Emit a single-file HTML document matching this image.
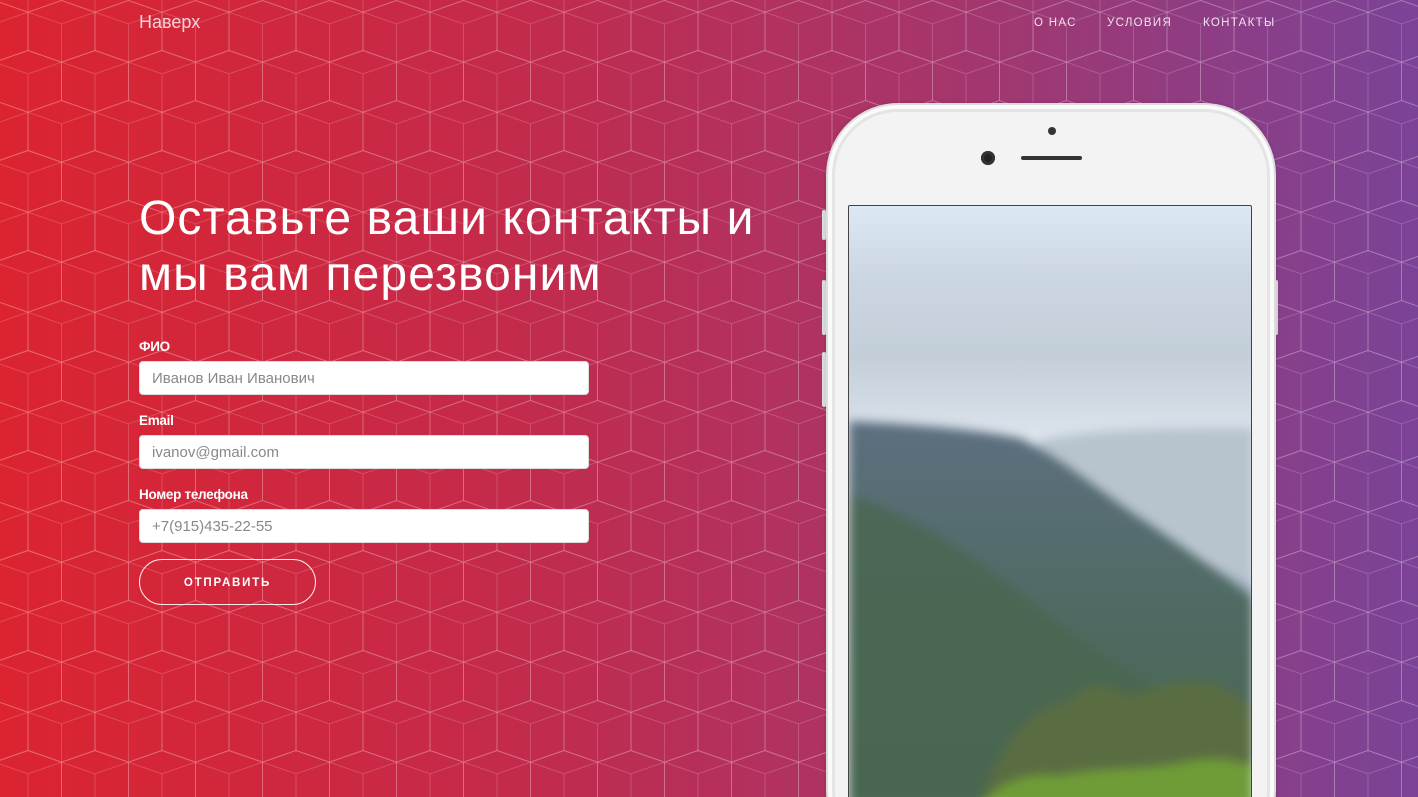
<!DOCTYPE html>
<html><head><meta charset="utf-8"><style>
*{margin:0;padding:0;box-sizing:border-box}
html,body{width:1418px;height:797px;overflow:hidden}
body{position:relative;font-family:"Liberation Sans","DejaVu Sans",sans-serif;color:#fff;
background:linear-gradient(90deg,#dc2430 0%,#c42a4a 35%,#a8356a 65%,#7b4397 100%)}
.pat{position:absolute;inset:0;background-image:url("data:image/svg+xml;utf8,<svg xmlns='http://www.w3.org/2000/svg' width='67' height='100'><g fill='none' stroke='rgba(255,255,255,0.17)' stroke-width='1'><path transform='translate(0 0)' d='M0 0L-33.5 11.7L0 23.4L33.5 11.7Z M-33.5 11.7V50L0 61.7L33.5 50V11.7M0 23.4V61.7'/><path transform='translate(67 0)' d='M0 0L-33.5 11.7L0 23.4L33.5 11.7Z M-33.5 11.7V50L0 61.7L33.5 50V11.7M0 23.4V61.7'/><path transform='translate(-33.5 -50)' d='M0 0L-33.5 11.7L0 23.4L33.5 11.7Z M-33.5 11.7V50L0 61.7L33.5 50V11.7M0 23.4V61.7'/><path transform='translate(33.5 -50)' d='M0 0L-33.5 11.7L0 23.4L33.5 11.7Z M-33.5 11.7V50L0 61.7L33.5 50V11.7M0 23.4V61.7'/><path transform='translate(100.5 -50)' d='M0 0L-33.5 11.7L0 23.4L33.5 11.7Z M-33.5 11.7V50L0 61.7L33.5 50V11.7M0 23.4V61.7'/><path transform='translate(-33.5 50)' d='M0 0L-33.5 11.7L0 23.4L33.5 11.7Z M-33.5 11.7V50L0 61.7L33.5 50V11.7M0 23.4V61.7'/><path transform='translate(33.5 50)' d='M0 0L-33.5 11.7L0 23.4L33.5 11.7Z M-33.5 11.7V50L0 61.7L33.5 50V11.7M0 23.4V61.7'/><path transform='translate(100.5 50)' d='M0 0L-33.5 11.7L0 23.4L33.5 11.7Z M-33.5 11.7V50L0 61.7L33.5 50V11.7M0 23.4V61.7'/></g></svg>");background-position:-5.5px 0.3px}
.top{position:absolute;left:139px;top:12px;font-size:18px;color:rgba(255,255,255,.8)}
.nav{position:absolute;top:17px;font-size:11.5px;letter-spacing:1.3px;color:rgba(255,255,255,.85)}
h1{position:absolute;left:139px;top:191px;font-weight:normal;font-size:48px;line-height:56px;letter-spacing:1.1px}
label{position:absolute;left:139px;font-weight:bold;font-size:13.5px;letter-spacing:-0.3px}
.in{position:absolute;left:139px;width:450px;height:34px;background:#fff;border-radius:4px;border:1px solid #ddd;color:#888;font-size:15px;padding:8px 12px}
.btn{position:absolute;left:139px;top:559px;width:177px;height:46px;border:1.5px solid rgba(255,255,255,.9);border-radius:23px;font-size:11.5px;font-weight:bold;letter-spacing:1.8px;text-align:center;line-height:46px}
.phone{position:absolute;left:826px;top:103px;width:450px;height:760px;border-radius:72px;background:#f3f3f3;border:2px solid #dcdcdc;box-shadow:inset 0 0 0 4px #fafafa,inset 0 0 0 7px #e4e4e4,0 0 4px rgba(0,0,0,.15)}
.scr{position:absolute;left:848px;top:205px;width:404px;height:600px;border:1px solid #444;border-radius:2px;overflow:hidden;
background:linear-gradient(180deg,#dde8f5 0%,#cbd6e2 12%,#c3ced9 25%,#d3dce5 34%,#dbe3ec 38%)}
.btnside{position:absolute;background:#ddd;width:4px;border-radius:2px}
</style></head><body>
<div class="pat"></div>
<div class="top">Наверх</div>
<div class="nav" style="left:1034px">О НАС</div>
<div class="nav" style="left:1107px">УСЛОВИЯ</div>
<div class="nav" style="left:1203px">КОНТАКТЫ</div>
<h1>Оставьте ваши контакты и<br>мы вам перезвоним</h1>
<label style="top:339px">ФИО</label>
<div class="in" style="top:361px">Иванов Иван Иванович</div>
<label style="top:413px">Email</label>
<div class="in" style="top:435px">ivanov@gmail.com</div>
<label style="top:487px">Номер телефона</label>
<div class="in" style="top:509px">+7(915)435-22-55</div>
<div class="btn">ОТПРАВИТЬ</div>

<div class="btnside" style="left:822px;top:210px;height:30px"></div>
<div class="btnside" style="left:822px;top:280px;height:55px"></div>
<div class="btnside" style="left:822px;top:352px;height:55px"></div>
<div class="btnside" style="left:1274px;top:280px;height:55px"></div>
<div class="phone"></div>
<div style="position:absolute;left:1048px;top:127px;width:8px;height:8px;border-radius:50%;background:#333"></div>
<div style="position:absolute;left:981px;top:151px;width:14px;height:14px;border-radius:50%;background:#222;box-shadow:inset 0 0 0 3px #333"></div>
<div style="position:absolute;left:1021px;top:156px;width:61px;height:4px;border-radius:2px;background:#333"></div>
<div class="scr">
<svg width="404" height="600" style="position:absolute;left:0;top:0;filter:blur(5px)">
<defs><linearGradient id="m" x1="0" y1="0" x2="0" y2="1"><stop offset="0" stop-color="#5d6f80"/><stop offset="0.5" stop-color="#4f6a62"/><stop offset="1" stop-color="#48664f"/></linearGradient></defs>
<path d="M190 235 C240 222 320 222 404 222 V600 H190Z" fill="#b7c3cd"/>
<path d="M250 300 C300 330 360 360 404 380 V600 H250Z" fill="#98a8b5"/>
<path d="M0 215 C60 218 120 222 170 232 C210 250 250 285 300 318 C340 345 375 370 404 392 V600 H0Z" fill="url(#m)"/>
<path d="M0 290 C80 310 160 380 240 440 C300 480 360 510 404 530 V600 H0Z" fill="#4a6650" opacity=".8"/>
<path d="M130 600 C150 540 180 500 220 495 C240 470 260 480 280 490 C310 480 340 470 370 480 C390 490 404 500 404 510 V600Z" fill="#5a6d42"/>
<path d="M130 600 C150 575 180 565 210 570 C250 560 300 565 340 555 C370 550 390 555 404 560 V600Z" fill="#6f9c37"/>
</svg>
</div>
</body></html>
